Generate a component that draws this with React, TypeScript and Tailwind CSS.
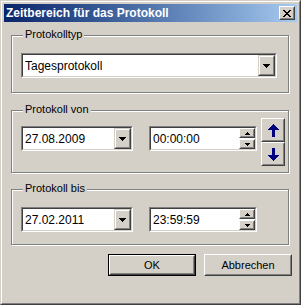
import type { ReactNode } from "react";

const FACE = "#d4d0c8";

function Sunken({ className = "", children }: { className?: string; children: ReactNode }) {
  return (
    <div className={`border border-t-[#808080] border-l-[#808080] border-r-white border-b-white ${className}`}>
      <div className="flex h-full border border-t-[#404040] border-l-[#404040] border-r-[#d4d0c8] border-b-[#d4d0c8] bg-white">
        {children}
      </div>
    </div>
  );
}

function Raised({ className = "", children }: { className?: string; children?: ReactNode }) {
  return (
    <div className={`border border-t-white border-l-white border-r-[#404040] border-b-[#404040] bg-[#d4d0c8] ${className}`}>
      <div className="flex h-full w-full items-center justify-center border border-t-[#d4d0c8] border-l-[#d4d0c8] border-r-[#808080] border-b-[#808080]">
        {children}
      </div>
    </div>
  );
}

function DropArrow() {
  return (
    <svg width="7" height="4" viewBox="0 0 7 4" shapeRendering="crispEdges">
      <path d="M0 0h7v1H0zM1 1h5v1H1zM2 2h3v1H2zM3 3h1v1H3z" fill="#000" />
    </svg>
  );
}

function SpinArrow({ down }: { down?: boolean }) {
  return (
    <svg width="5" height="3" viewBox="0 0 5 3" shapeRendering="crispEdges">
      {down ? (
        <path d="M0 0h5v1H0zM1 1h3v1H1zM2 2h1v1H2z" fill="#000" />
      ) : (
        <path d="M2 0h1v1H2zM1 1h3v1H1zM0 2h5v1H0z" fill="#000" />
      )}
    </svg>
  );
}

function BigArrow({ down }: { down?: boolean }) {
  return (
    <svg width="11" height="13" viewBox="0 0 11 13" shapeRendering="crispEdges" className={down ? "rotate-180" : ""}>
      <path d="M5 0h1v1h1v1h1v1h1v1h1v1h1v1H7v7H4V6H0V5h1V4h1V3h1V2h1V1h1z" fill="#000080" />
    </svg>
  );
}

function Combo({ value, className = "" }: { value: string; className?: string }) {
  return (
    <Sunken className={`h-[25px] ${className}`}>
      <div className="flex flex-1 items-center pl-[2px] text-[12px] text-black">{value}</div>
      <div className="flex w-[17px] border border-t-[#d4d0c8] border-l-[#d4d0c8] border-r-[#404040] border-b-[#404040] bg-[#d4d0c8]">
        <div className="flex flex-1 items-center justify-center border border-t-white border-l-white border-r-[#808080] border-b-[#808080]">
          <DropArrow />
        </div>
      </div>
    </Sunken>
  );
}

function TimeField({ value }: { value: string }) {
  return (
    <Sunken className="ml-[16px] h-[25px] w-[108px]">
      <div className="flex flex-1 items-center pl-[2px] text-[12px] text-black">{value}</div>
      <div className="flex w-[16px] flex-col gap-[1px]">
        <Raised className="h-[10px]">
          <SpinArrow />
        </Raised>
        <Raised className="h-[10px]">
          <SpinArrow down />
        </Raised>
      </div>
    </Sunken>
  );
}

function Group({ label, className = "", children }: { label: string; className?: string; children: ReactNode }) {
  return (
    <div className={`relative ml-[7px] w-[278px] border border-[#808080] shadow-[inset_1px_1px_0_#fff,1px_1px_0_#fff] ${className}`}>
      <span className="absolute -top-[8px] left-[11px] bg-[#d4d0c8] px-[2px] text-[11px] leading-[13px] text-black">{label}</span>
      {children}
    </div>
  );
}

export default function App() {
  return (
    <div className="h-[305px] w-[301px] border border-t-[#d4d0c8] border-l-[#d4d0c8] border-r-[#404040] border-b-[#404040] font-['Liberation_Sans',Arial,sans-serif]">
      <div className="flex h-full flex-col border border-t-white border-l-white border-r-[#808080] border-b-[#808080] bg-[#d4d0c8] p-[2px]">
        {/* title bar */}
        <div className="flex h-[18px] items-center bg-linear-to-r from-[#0a246a] to-[#a6caf0] pl-[2px] pr-[2px]">
          <span className="flex-1 text-[12px] font-bold text-white">Zeitbereich für das Protokoll</span>
          <Raised className="h-[14px] w-[16px]">
            <svg width="8" height="7" viewBox="0 0 8 7" shapeRendering="crispEdges">
              <path d="M0 0h2v1H0zM6 0h2v1H6zM1 1h2v1H1zM5 1h2v1H5zM2 2h4v1H2zM3 3h2v1H3zM2 4h4v1H2zM1 5h2v1H1zM5 5h2v1H5zM0 6h2v1H0zM6 6h2v1H6z" fill="#000" />
            </svg>
          </Raised>
        </div>

        <Group label="Protokolltyp" className="mt-[13px] pb-[14px] pl-[9px] pt-[17px]">
          <Combo value="Tagesprotokoll" className="w-[256px]" />
        </Group>

        <Group label="Protokoll von" className="mt-[17px] pb-[6px] pl-[9px] pt-[7px]">
          <div className="flex items-start">
            <Combo value="27.08.2009" className="mt-[8px] w-[112px]" />
            <div className="mt-[8px]">
              <TimeField value="00:00:00" />
            </div>
            <div className="ml-[4px] flex flex-col">
              <Raised className="h-[24px] w-[24px]">
                <BigArrow />
              </Raised>
              <Raised className="h-[24px] w-[24px]">
                <BigArrow down />
              </Raised>
            </div>
          </div>
        </Group>

        <Group label="Protokoll bis" className="mt-[16px] pb-[12px] pl-[9px] pt-[17px]">
          <div className="flex items-start">
            <Combo value="27.02.2011" className="w-[112px]" />
            <TimeField value="23:59:59" />
          </div>
        </Group>

        <div className="mt-[9px] flex justify-end gap-[8px] pr-[5px] text-[11px] text-black">
          <div className="h-[22px] w-[88px] border border-black">
            <Raised className="h-full w-full">OK</Raised>
          </div>
          <Raised className="h-[22px] w-[88px]">Abbrechen</Raised>
        </div>
      </div>
    </div>
  );
}

export { FACE };
